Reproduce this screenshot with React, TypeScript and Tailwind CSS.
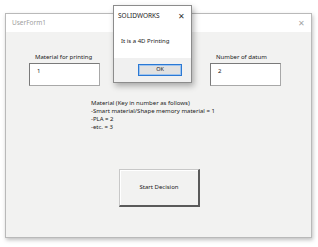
import React from "react";

export default function App() {
  const font = { fontFamily: '"Noto Sans", "Liberation Sans", sans-serif' };
  return (
    <div className="relative w-[318px] h-[247px] bg-white overflow-hidden text-[#1a1a1a]" style={font}>
      {/* Main window */}
      <div className="absolute left-[5px] top-[13px] w-[307px] h-[225px] border border-[#b9b9b9] bg-[#f2f2f1] shadow-[1px_2px_4px_rgba(0,0,0,0.25)] flex flex-col">
        <div className="h-[18px] bg-white flex items-center justify-between pl-[6px] pr-[6px]">
          <span className="text-[6.5px] text-[#a0a0a0] leading-none">UserForm1</span>
          <span className="text-[8px] text-[#a5a5a5] leading-none font-light">✕</span>
        </div>
        <div className="flex-1 flex flex-col pt-[21px]">
          <div className="flex justify-between pl-[23px] pr-[30px]">
            <div className="flex flex-col">
              <span className="text-[6px] leading-[8px] ml-[6px] mb-[2px]">Material for printing</span>
              <div className="w-[71px] h-[23px] bg-white border border-[#a8a8a8] border-t-[#7a7a7a] border-l-[#7a7a7a] pl-[7px] pt-[3px] text-[6px] leading-[8px]">1</div>
            </div>
            <div className="flex flex-col">
              <span className="text-[6px] leading-[8px] ml-[6px] mb-[2px]">Number of datum</span>
              <div className="w-[71px] h-[23px] bg-white border border-[#a8a8a8] border-t-[#7a7a7a] border-l-[#7a7a7a] pl-[7px] pt-[3px] text-[6px] leading-[8px]">2</div>
            </div>
          </div>
          <div className="ml-[85px] mt-[13px] text-[6px] leading-[8px] flex flex-col">
            <span>Material (Key in number as follows)</span>
            <span>-Smart material/Shape memory material = 1</span>
            <span>-PLA = 2</span>
            <span>-etc. = 3</span>
          </div>
          <div className="ml-[113px] mt-[38px] w-[81px] h-[38px] border border-[#c8c8c8] border-r-[#5a5a5a] border-b-[#5a5a5a] border-r-2 border-b-2 flex items-center justify-center text-[6px] bg-[#f2f2f1] shadow-[inset_1px_1px_0_#ffffff]">
            Start Decision
          </div>
        </div>
      </div>

      {/* SOLIDWORKS dialog */}
      <div className="absolute left-[113px] top-[5px] w-[79px] h-[78px] border border-[#8c8c8c] bg-white shadow-[2px_3px_6px_rgba(0,0,0,0.3)] flex flex-col">
        <div className="h-[20px] flex items-center justify-between pl-[4px] pr-[6px]">
          <span className="text-[6.5px] leading-none">SOLIDWORKS</span>
          <span className="text-[8px] leading-none text-[#333]">✕</span>
        </div>
        <div className="h-[32px] pl-[7px] pt-[11px] text-[6px] leading-[8px]">It is a 4D Printing</div>
        <div className="flex-1 bg-[#f0f0f0] flex items-center justify-end pr-[9px]">
          <div className="w-[44px] h-[12px] border border-[#2a78d4] bg-[#e1e1e1] flex items-center justify-center text-[5.5px] leading-none shadow-[inset_0_0_0_1px_#9fc4ee]">OK</div>
        </div>
      </div>
    </div>
  );
}
